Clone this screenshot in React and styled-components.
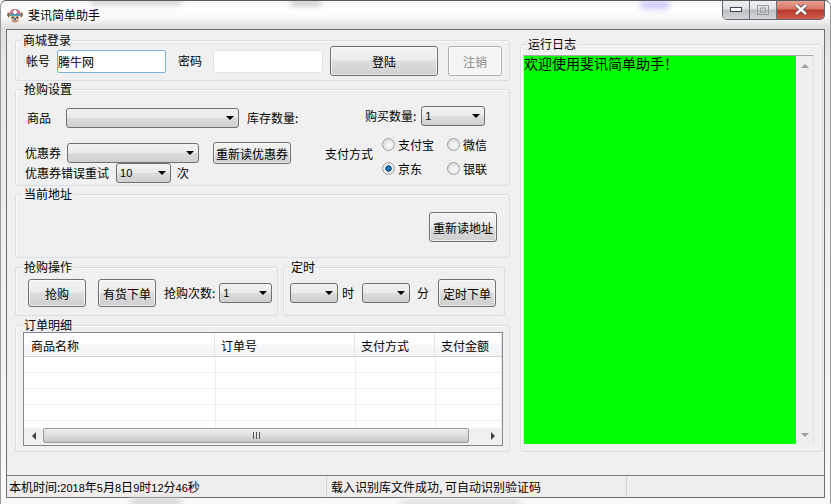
import React from "react";
import styled, { createGlobalStyle } from "styled-components";

const FONT = `"Noto Sans CJK SC", "Liberation Sans", sans-serif`;

const GlobalStyle = createGlobalStyle`
  html, body {
    margin: 0;
    padding: 0;
    width: 831px;
    height: 504px;
    overflow: hidden;
    background: #fff;
    font-family: ${FONT};
    font-size: 12px;
    color: #000;
  }
`;

const Frame = styled.div`
  position: relative;
  box-sizing: border-box;
  width: 831px;
  height: 504px;
  padding: 0 5px 6px 5px;
  display: flex;
  flex-direction: column;
  border-top: 1px solid #5a5a5a;
  border-left: 1px solid #9a9a9a;
  border-right: 1px solid #9a9a9a;
  border-radius: 6px 6px 0 0;
  background: linear-gradient(180deg, #f6f6f6 0, #ffffff 8px, #fafafa 16px, #dedede 27px, #e8e8e8 60px, #f2f2f2 300px, #fafafa 100%);
  overflow: hidden;
`;

const Smudge = styled.div`
  position: absolute;
  left: ${(p) => p.$x}px;
  top: ${(p) => p.$y}px;
  width: ${(p) => p.$w}px;
  height: ${(p) => p.$h}px;
  background: ${(p) => p.$c};
  filter: blur(3px);
`;

const TitleBar = styled.div`
  height: 28px;
  flex: none;
  display: flex;
  align-items: flex-start;
  position: relative;
`;

const AppIcon = styled.svg`
  margin: 7px 0 0 1px;
  flex: none;
`;

const Title = styled.div`
  margin: 6px 0 0 5px;
  line-height: 16px;
  font-size: 12px;
  color: #000;
  text-shadow: 0 0 4px #fff, 0 0 4px #fff;
`;

const CaptionButtons = styled.div`
  margin-left: auto;
  display: flex;
  height: 19px;
  margin-top: -1px;
  border: 1px solid #5e6672;
  border-top: none;
  border-radius: 0 0 5px 5px;
  overflow: hidden;
`;

const CaptionButton = styled.div`
  width: ${(p) => p.$w}px;
  display: flex;
  align-items: center;
  justify-content: center;
  border-left: ${(p) => (p.$first ? "none" : "1px solid #68707c")};
  background: ${(p) =>
    p.$close
      ? "linear-gradient(180deg, #e9a698 0, #d9786a 45%, #b8382a 55%, #cf5c4c 100%)"
      : "linear-gradient(180deg, #f2f3f5 0, #dfe2e5 45%, #bcc0c4 55%, #d4d6d9 100%)"};
`;

const Client = styled.div`
  flex: 1;
  display: flex;
  flex-direction: column;
  box-sizing: border-box;
  border: 1px solid #6f6f6f;
  background: #f0f0f0;
  min-height: 0;
`;

const Body = styled.div`
  flex: 1;
  display: flex;
  gap: 10px;
  padding: 10px 1px 0 8px;
  min-height: 0;
`;

const LeftColumn = styled.div`
  width: 495px;
  flex: none;
  display: flex;
  flex-direction: column;
  gap: 8px;
`;

const Group = styled.div`
  position: relative;
  box-sizing: border-box;
  width: ${(p) => (p.$w ? `${p.$w}px` : "100%")};
  height: ${(p) => p.$h}px;
  margin-top: ${(p) => p.$mt || 0}px;
  margin-left: ${(p) => p.$ml || 0}px;
  border: 1px solid #d7e0e8;
  border-radius: 3px;
  box-shadow: inset 1px 1px 0 #fbfbfb;
  display: flex;
  flex: none;
`;

const Legend = styled.span`
  position: absolute;
  left: ${(p) => p.$x || 7}px;
  top: -8px;
  padding: 0 1px;
  background: #f0f0f0;
  line-height: 14px;
  font-size: 12px;
`;

const LoginRow = styled.div`
  display: flex;
  align-items: center;
  padding: 5px 0 0 10px;
  height: 30px;
`;

const Label = styled.span`
  flex: none;
  white-space: nowrap;
  line-height: 14px;
  margin-left: ${(p) => p.$ml || 0}px;
  margin-top: ${(p) => p.$mt || 0}px;
`;

const Field = styled.div`
  flex: none;
  box-sizing: border-box;
  width: ${(p) => p.$w}px;
  height: 23px;
  margin-left: ${(p) => p.$ml || 0}px;
  line-height: 21px;
  background: #fff;
  border: 1px solid ${(p) => (p.$focus ? "#7fb2d6" : "#e2e3ea")};
  border-radius: 2px;
`;

const Button = styled.div`
  flex: none;
  box-sizing: border-box;
  width: ${(p) => p.$w}px;
  height: ${(p) => p.$h}px;
  margin-left: ${(p) => p.$ml || 0}px;
  display: flex;
  align-items: center;
  justify-content: center;
  white-space: nowrap;
  border: 1px solid ${(p) => (p.$disabled ? "#adb2b5" : "#707070")};
  border-radius: 3px;
  color: ${(p) => (p.$disabled ? "#8d8d8d" : "#000")};
  background: ${(p) =>
    p.$disabled
      ? "#f4f4f4"
      : "linear-gradient(180deg, #f3f3f3 0, #ebebeb 47%, #dddddd 50%, #cfcfcf 100%)"};
  box-shadow: inset 0 0 0 1px rgba(255, 255, 255, 0.6);
`;

const ComboBox = styled.div`
  flex: none;
  box-sizing: border-box;
  width: ${(p) => p.$w}px;
  height: 20px;
  margin-left: ${(p) => p.$ml || 0}px;
  padding: 0 4px 0 3px;
  display: flex;
  align-items: center;
  justify-content: space-between;
  border: 1px solid #707070;
  border-radius: 3px;
  background: linear-gradient(180deg, #f2f2f2 0, #ebebeb 47%, #dddddd 50%, #cfcfcf 100%);
  font-family: "Liberation Sans", sans-serif;
  font-size: 11px;
`;

const Arrow = styled.i`
  margin-left: auto;
  width: 0;
  height: 0;
  border-left: 4px solid transparent;
  border-right: 4px solid transparent;
  border-top: 4px solid #000;
`;

const Combo = ({ w, ml, value }) => (
  <ComboBox $w={w} $ml={ml}>
    {value}
    <Arrow />
  </ComboBox>
);

const SettingsLeft = styled.div`
  width: 309px;
  flex: none;
  display: flex;
  flex-direction: column;
  padding: 18px 0 0 9px;
  box-sizing: border-box;
`;

const SettingsRight = styled.div`
  flex: 1;
  display: flex;
  flex-direction: column;
  padding-top: 16px;
`;

const Row = styled.div`
  display: flex;
  align-items: center;
  margin-top: ${(p) => p.$mt || 0}px;
  margin-left: ${(p) => p.$ml || 0}px;
`;

const RadioGrid = styled.div`
  display: grid;
  grid-template-columns: 65px 50px;
  grid-auto-rows: 24px;
  margin-left: 9px;
`;

const RadioItem = styled.label`
  display: flex;
  align-items: center;
  gap: 3px;
`;

const RadioDot = styled.span`
  box-sizing: border-box;
  width: 13px;
  height: 13px;
  border-radius: 50%;
  border: 1px solid #a2a2a2;
  background: ${(p) =>
    p.$on
      ? "radial-gradient(circle, #2a8fd4 0, #0b5a9a 30%, #1c5f8c 38%, #eeeeee 44%, #d4d4d4 100%)"
      : "radial-gradient(circle at 60% 60%, #fafafa 0, #ececec 40%, #cccccc 100%)"};
`;

const Radio = ({ on, children }) => (
  <RadioItem>
    <RadioDot $on={on} />
    {children}
  </RadioItem>
);

const AddressBody = styled.div`
  flex: 1;
  display: flex;
  justify-content: flex-end;
  padding: 17px 12px 0 0;
`;

const ActionRow = styled.div`
  display: flex;
  align-items: center;
  height: 28px;
  padding-top: 11px;
  padding-left: ${(p) => p.$pl}px;
`;

const Table = styled.div`
  box-sizing: border-box;
  width: 480px;
  height: 114px;
  margin: 6px 0 0 7px;
  border: 1px solid #828790;
  background: #fff;
  display: flex;
  flex-direction: column;
`;

const TableHeader = styled.div`
  flex: none;
  height: 24px;
  box-sizing: border-box;
  display: flex;
  border-bottom: 1px solid #d5d5d5;
  background: linear-gradient(180deg, #fff 0, #fff 45%, #f7f8f9 50%, #f2f3f5 100%);
`;

const HeaderCell = styled.div`
  box-sizing: border-box;
  flex: none;
  width: ${(p) => p.$w}px;
  padding-left: ${(p) => p.$pl || 6}px;
  line-height: 26px;
  border-right: 1px solid #e5e5e5;
  overflow: hidden;
`;

const TableRows = styled.div`
  flex: 1;
  min-height: 0;
  overflow: hidden;
`;

const TableRow = styled.div`
  height: 16px;
  box-sizing: border-box;
  display: flex;
  border-bottom: 1px solid #efefef;
`;

const TableCell = styled.div`
  box-sizing: border-box;
  flex: none;
  width: ${(p) => p.$w}px;
  border-right: 1px solid #efefef;
`;

const HScroll = styled.div`
  flex: none;
  height: 17px;
  display: flex;
  align-items: flex-start;
  background: #f0f0f0;
`;

const ScrollEnd = styled.div`
  flex: none;
  box-sizing: border-box;
  width: ${(p) => p.$w}px;
  height: 15px;
  padding-right: ${(p) => p.$pr || 0}px;
  display: flex;
  align-items: center;
  justify-content: ${(p) => (p.$pr ? "flex-end" : "center")};
`;

const ScrollTri = styled.i`
  width: 0;
  height: 0;
  border-top: 4px solid transparent;
  border-bottom: 4px solid transparent;
  border-${(p) => (p.$dir === "left" ? "right" : "left")}: 4px solid #444;
`;

const HThumb = styled.div`
  flex: 1;
  height: 15px;
  box-sizing: border-box;
  display: flex;
  align-items: center;
  justify-content: center;
  border: 1px solid #9a9a9a;
  border-radius: 2px;
  background: linear-gradient(180deg, #f0f0f0 0, #dedede 50%, #c4c4c4 100%);
`;

const Grip = styled.div`
  width: 7px;
  height: 7px;
  background: repeating-linear-gradient(90deg, #555 0, #555 1px, transparent 1px, transparent 3px);
`;

const LogGroupBody = styled.div`
  flex: 1;
  display: flex;
  margin: 10px 8px 7px 2px;
  border-top: 1px solid #a9a9a9;
  border-left: 1px solid #e3e3e3;
  border-right: 1px solid #e3e3e3;
  min-width: 0;
`;

const LogText = styled.div`
  flex: 1;
  background: #00ff00;
  color: #000;
  font-size: 14px;
  line-height: 14px;
  white-space: nowrap;
`;

const VScroll = styled.div`
  flex: none;
  width: 17px;
  background: #efefef;
  display: flex;
  flex-direction: column;
  justify-content: space-between;
  align-items: center;
  padding: 8px 0 7px;
  box-sizing: border-box;
`;

const VTri = styled.i`
  width: 0;
  height: 0;
  border-left: 4px solid transparent;
  border-right: 4px solid transparent;
  border-${(p) => (p.$dir === "up" ? "bottom" : "top")}: 4px solid #a0a0a0;
`;

const StatusBar = styled.div`
  flex: none;
  height: 22px;
  box-sizing: border-box;
  border-top: 1px solid #7f7f7f;
  background: #f0eded;
  display: flex;
`;

const StatusCell = styled.div`
  box-sizing: border-box;
  width: ${(p) => p.$w}px;
  flex: ${(p) => (p.$w ? "none" : "1")};
  padding-left: ${(p) => p.$pl}px;
  line-height: 21px;
  border-right: ${(p) => (p.$end ? "none" : "1px solid #d9d6d6")};
  white-space: nowrap;
`;

const Num = styled.span`
  font-family: "Liberation Sans", sans-serif;
  font-size: 11px;
`;

const cols = [192, 140, 80, 66];
const rows = [0, 1, 2, 3, 4];

export default function App() {
  return (
    <>
      <GlobalStyle />
      <Frame>
        <Smudge $x={90} $y={-2} $w={90} $h={5} $c="#c4c4c4" />
        <Smudge $x={640} $y={1} $w={28} $h={6} $c="#b9b9ff" />
        <Smudge $x={290} $y={0} $w={30} $h={4} $c="#b4b4b4" />
        <Smudge $x={130} $y={497} $w={50} $h={8} $c="#d4d4d4" />
        <Smudge $x={400} $y={499} $w={120} $h={8} $c="#dedede" />
        <TitleBar>
          <AppIcon width="16" height="16" viewBox="0 0 16 16">
            <path d="M1 4 L3 6 L2 10 L0 7Z M15 4 L13 6 L14 10 L16 7Z" fill="#8a5a34" />
            <path d="M2.5 7 C2.5 2.5 5 1 8 1 C11 1 13.5 2.5 13.5 7Z" fill="#cf6f8d" />
            <rect x="7" y="2" width="2" height="4" fill="#fff" />
            <rect x="6" y="3" width="4" height="2" fill="#fff" />
            <rect x="2.5" y="6" width="11" height="2" fill="#4f9fb8" />
            <path d="M3.5 8 H12.5 V10 C12.5 13 11 15 8 15 C5 15 3.5 13 3.5 10Z" fill="#e6c4a6" />
            <circle cx="5.8" cy="9.6" r="1" fill="#222" />
            <circle cx="10.2" cy="9.6" r="1" fill="#222" />
            <rect x="7" y="10" width="2" height="2" fill="#2a6fc0" />
            <path d="M5.5 13 H10.5" stroke="#a34a4a" strokeWidth="1" />
          </AppIcon>
          <Title>斐讯简单助手</Title>
          <CaptionButtons>
            <CaptionButton $w={26} $first>
              <svg width="12" height="6" viewBox="0 0 12 6">
                <rect x="0.5" y="0.5" width="11" height="4" fill="#fff" stroke="#3c4757" />
              </svg>
            </CaptionButton>
            <CaptionButton $w={26}>
              <svg width="12" height="10" viewBox="0 0 12 10">
                <rect x="0.5" y="0.5" width="11" height="9" fill="none" stroke="#9a9ea3" />
                <rect x="3.5" y="3" width="5" height="4" fill="none" stroke="#9a9ea3" />
              </svg>
            </CaptionButton>
            <CaptionButton $w={47} $close>
              <svg width="14" height="11" viewBox="0 0 14 11">
                <path d="M2 1 L12 10 M12 1 L2 10" stroke="#4a4a4a" strokeWidth="4" />
                <path d="M2 1 L12 10 M12 1 L2 10" stroke="#fff" strokeWidth="2.4" />
              </svg>
            </CaptionButton>
          </CaptionButtons>
        </TitleBar>
        <Client>
          <Body>
            <LeftColumn>
              <Group $h={41}>
                <Legend $x={6}>商城登录</Legend>
                <LoginRow>
                  <Label>帐号</Label>
                  <Field $w={109} $ml={7} $focus>腾牛网</Field>
                  <Label $ml={12}>密码</Label>
                  <Field $w={110} $ml={11} />
                  <Button $w={108} $h={30} $ml={7}>登陆</Button>
                  <Button $w={54} $h={30} $ml={10} $disabled>注销</Button>
                </LoginRow>
              </Group>
              <Group $h={97}>
                <Legend $x={7}>抢购设置</Legend>
                <SettingsLeft>
                  <Row $ml={2}>
                    <Label>商品</Label>
                    <Combo w={173} ml={15} />
                    <Label $ml={8}>库存数量:</Label>
                  </Row>
                  <Row $mt={14}>
                    <Label>优惠券</Label>
                    <Combo w={132} ml={6} />
                    <Button $w={78} $h={22} $ml={14}>重新读优惠券</Button>
                  </Row>
                  <Row $mt={-1}>
                    <Label>优惠券错误重试</Label>
                    <Combo w={55} ml={7} value="10" />
                    <Label $ml={6}>次</Label>
                  </Row>
                </SettingsLeft>
                <SettingsRight>
                  <Row $ml={40}>
                    <Label>购买数量:</Label>
                    <Combo w={64} ml={5} value="1" />
                  </Row>
                  <Row $mt={6}>
                    <Label $mt={-4}>支付方式</Label>
                    <RadioGrid>
                      <Radio>支付宝</Radio>
                      <Radio>微信</Radio>
                      <Radio on>京东</Radio>
                      <Radio>银联</Radio>
                    </RadioGrid>
                  </Row>
                </SettingsRight>
              </Group>
              <Group $h={64}>
                <Legend $x={7}>当前地址</Legend>
                <AddressBody>
                  <Button $w={68} $h={30}>重新读地址</Button>
                </AddressBody>
              </Group>
              <Row $mt={1}>
                <Group $w={263} $h={49}>
                  <Legend $x={7}>抢购操作</Legend>
                  <ActionRow $pl={12}>
                    <Button $w={58} $h={28}>抢购</Button>
                    <Button $w={58} $h={28} $ml={12}>有货下单</Button>
                    <Label $ml={8}>抢购次数:</Label>
                    <Combo w={53} ml={4} value="1" />
                  </ActionRow>
                </Group>
                <Group $w={222} $h={49} $ml={5}>
                  <Legend $x={6}>定时</Legend>
                  <ActionRow $pl={6}>
                    <Combo w={48} />
                    <Label $ml={4}>时</Label>
                    <Combo w={48} ml={8} />
                    <Label $ml={7}>分</Label>
                    <Button $w={58} $h={28} $ml={9}>定时下单</Button>
                  </ActionRow>
                </Group>
              </Row>
              <Group $h={127} $mt={1}>
                <Legend $x={7}>订单明细</Legend>
                <Table>
                  <TableHeader>
                    <HeaderCell $w={191} $pl={7}>商品名称</HeaderCell>
                    <HeaderCell $w={140}>订单号</HeaderCell>
                    <HeaderCell $w={80}>支付方式</HeaderCell>
                    <HeaderCell $w={67}>支付金额</HeaderCell>
                  </TableHeader>
                  <TableRows>
                    {rows.map((r) => (
                      <TableRow key={r}>
                        {cols.map((w, i) => (
                          <TableCell key={i} $w={w} />
                        ))}
                      </TableRow>
                    ))}
                  </TableRows>
                  <HScroll>
                    <ScrollEnd $w={19}><ScrollTri $dir="left" /></ScrollEnd>
                    <HThumb><Grip /></HThumb>
                    <ScrollEnd $w={33} $pr={7}><ScrollTri $dir="right" /></ScrollEnd>
                  </HScroll>
                </Table>
              </Group>
            </LeftColumn>
            <Group $w={303} $h={408} $mt={4}>
              <Legend $x={6}>运行日志</Legend>
              <LogGroupBody>
                <LogText>欢迎使用斐讯简单助手！</LogText>
                <VScroll>
                  <VTri $dir="up" />
                  <VTri $dir="down" />
                </VScroll>
              </LogGroupBody>
            </Group>
          </Body>
          <StatusBar>
            <StatusCell $w={320} $pl={2}>
              本机时间:<Num>2018</Num>年<Num>5</Num>月<Num>8</Num>日<Num>9</Num>时<Num>12</Num>分<Num>46</Num>秒
            </StatusCell>
            <StatusCell $w={300} $pl={4}>载入识别库文件成功, 可自动识别验证码</StatusCell>
            <StatusCell $pl={0} $end />
          </StatusBar>
        </Client>
      </Frame>
    </>
  );
}
